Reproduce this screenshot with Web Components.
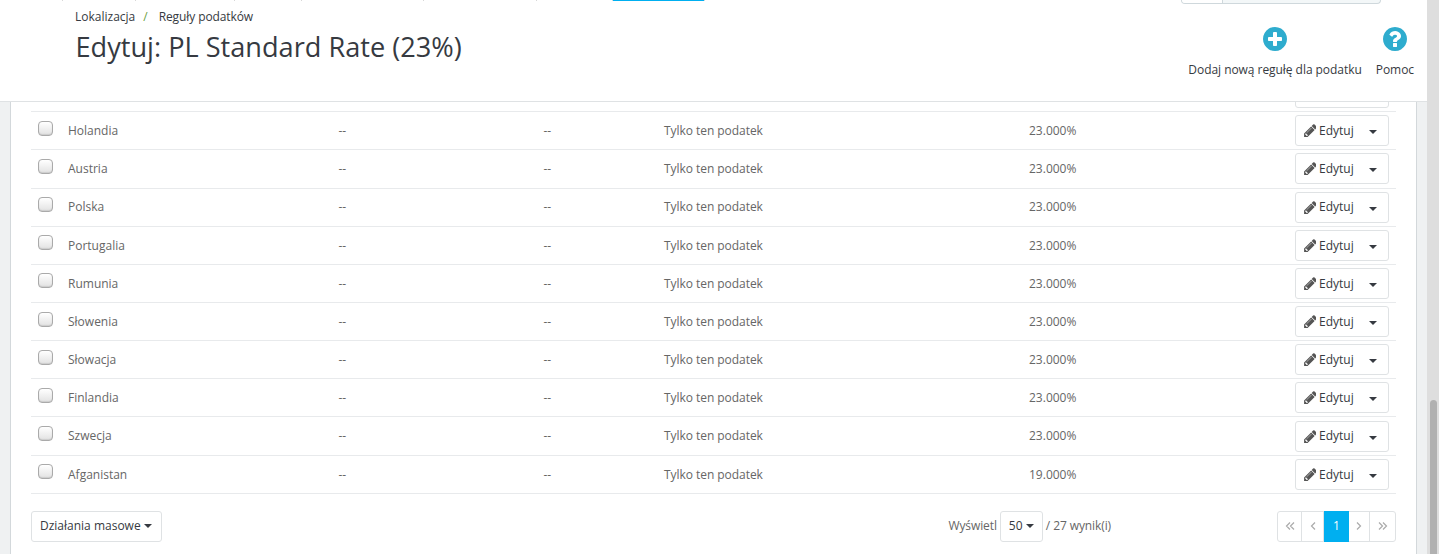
<!DOCTYPE html>
<html lang="pl"><head><meta charset="utf-8"><title>Edytuj</title>
<style>
html,body{margin:0;padding:0;height:554px;overflow:hidden;background:#eff1f2}
body{font:12px/18px "Open Sans",sans-serif;color:#363a41}
</style></head>
<body>
<admin-shell>
  <page-head>
    <head-action slot="actions" label="Dodaj nową regułę dla podatku" icon="plus"></head-action>
    <head-action slot="actions" label="Pomoc" icon="help"></head-action>
  </page-head>
  <rules-panel>
    <tax-row clipped></tax-row>
    <tax-row name="Holandia" rate="23.000%"></tax-row>
    <tax-row name="Austria" rate="23.000%"></tax-row>
    <tax-row name="Polska" rate="23.000%"></tax-row>
    <tax-row name="Portugalia" rate="23.000%"></tax-row>
    <tax-row name="Rumunia" rate="23.000%"></tax-row>
    <tax-row name="Słowenia" rate="23.000%"></tax-row>
    <tax-row name="Słowacja" rate="23.000%"></tax-row>
    <tax-row name="Finlandia" rate="23.000%"></tax-row>
    <tax-row name="Szwecja" rate="23.000%"></tax-row>
    <tax-row name="Afganistan" rate="19.000%"></tax-row>
    <list-footer slot="footer"></list-footer>
  </rules-panel>
</admin-shell>
<script>
const PENCIL='M491 1536l91-91-235-235-91 91v107h128v128h107zm523-928q0-22-22-22-10 0-17 7l-542 542q-7 7-7 17 0 22 22 22 10 0 17-7l542-542q7-7 7-17zm-54-192l416 416-832 832h-416v-416zm683 96q0 53-37 90l-166 166-416-416 166-165q36-38 90-38 53 0 91 38l235 234q37 39 37 91z';
const ICONS={
 plus:'M1344 960v-128q0-26-19-45t-45-19h-256v-256q0-26-19-45t-45-19h-128q-26 0-45 19t-19 45v256h-256q-26 0-45 19t-19 45v128q0 26 19 45t45 19h256v256q0 26 19 45t45 19h128q26 0 45-19t19-45v-256h256q26 0 45-19t19-45zm320-64q0 209-103 385.5t-279.5 279.5-385.5 103-385.5-103-279.5-279.5-103-385.5 103-385.5 279.5-279.5 385.5-103 385.5 103 279.5 279.5 103 385.5z',
 help:'M1024 1376v-192q0-14-9-23t-23-9h-192q-14 0-23 9t-9 23v192q0 14 9 23t23 9h192q14 0 23-9t9-23zm256-672q0-88-55.5-163t-138.5-116-170-41q-243 0-371 213-15 24 8 42l132 100q7 6 19 6 16 0 25-12 53-68 86-92 34-24 86-24 48 0 85.5 26t37.5 59q0 38-20 61t-68 45q-63 28-115.5 86.5t-52.5 125.5v36q0 14 9 23t23 9h192q14 0 23-9t9-23q0-19 21.5-49.5t54.5-49.5q32-18 49-28.5t46-35 44.5-48 28-60.5 12.5-81zm384 192q0 209-103 385.5t-279.5 279.5-385.5 103-385.5-103-279.5-279.5-103-385.5 103-385.5 279.5-279.5 385.5-103 385.5 103 279.5 279.5 103 385.5z'
};
function def(name,html){
  customElements.define(name,class extends HTMLElement{
    connectedCallback(){
      if(this.shadowRoot)return;
      const r=this.attachShadow({mode:'open'});
      r.innerHTML=typeof html==='function'?html(this):html;
    }
  });
}
def('admin-shell',`<style>
:host{display:flex;width:1439px;height:554px;overflow:hidden}
.main{width:1427px;display:flex;flex-direction:column;height:554px;overflow:hidden}
.track{width:12px;height:554px;background:#dedede;position:relative;flex:none}
.thumb{position:absolute;left:3px;top:400px;width:7px;height:154px;background:#b1b1b1;border-radius:4px 4px 0 0}
</style><div class="main"><slot></slot></div><div class="track"><div class="thumb"></div></div>`);

def('page-head',`<style>
:host{display:block;height:102px;box-sizing:border-box;background:#fff;border-bottom:1px solid #dfe2e4;flex:none;overflow:hidden}
.nav{display:flex;height:4px}
.tabs{display:flex;height:1px}
.tabs i{display:block;box-sizing:border-box;height:1px;border-right:1px solid #d8d8d8}
.tabs i.on{border-right:0;background:#00aff0}
.search{margin:0 46px 0 auto;width:200px;height:4px;box-sizing:border-box;border:1px solid #cfd8dc;border-top:0;border-radius:0 0 4px 4px;display:flex;background:#f3f7f8}
.search b{display:block;width:41px;background:#fff;border-right:1px solid #cfd8dc;box-sizing:border-box;border-radius:0 0 0 4px}
.body{display:flex;justify-content:space-between}
.left{padding:4px 0 0 75px}
.crumbs{font-size:12px;line-height:18px;color:#363a41;display:flex}
.crumbs em{font-style:normal;color:#6c9f44;margin:0 11px 0 8px}
.crumbs span:last-child{letter-spacing:-.1px}
h1{margin:2px 0 0 .5px;font-weight:400;font-size:27.15px;line-height:38px;color:#363a41;white-space:nowrap}
.acts{display:flex;padding:23px 13px 0 0;gap:14px}
</style>
<div class="nav"><div class="tabs">
<i style="width:63px"></i><i style="width:73px"></i><i style="width:99px"></i><i style="width:67px"></i><i style="width:122px"></i><i style="width:113px"></i><i style="width:76px"></i><i class="on" style="width:91px"></i><i style="width:1px"></i>
</div><div class="search"><b></b></div></div>
<div class="body"><div class="left"><nav class="crumbs"><span>Lokalizacja</span><em>/</em><span>Reguły podatków</span></nav>
<h1>Edytuj: PL Standard Rate (23%)</h1></div>
<div class="acts"><slot name="actions"></slot></div></div>`);

def('head-action',h=>`<style>
:host{display:flex;flex-direction:column;align-items:center;color:#363a41;font-size:12px;line-height:18px;white-space:nowrap;letter-spacing:-.05px}
svg{width:24px;height:24px;display:block;margin-bottom:10px;fill:#2eacce}
</style><svg viewBox="128 128 1536 1536"><path d="${ICONS[h.getAttribute('icon')]}"/></svg><span>${h.getAttribute('label')}</span>`);

def('rules-panel',`<style>
:host{display:block;flex:1;margin-left:10px;margin-right:10px;box-sizing:border-box;background:#fff;border-left:1px solid #d3d8db;border-right:1px solid #d3d8db;padding:0 20px;overflow:hidden}
</style><slot></slot><slot name="footer"></slot>`);

def('edit-button',`<style>
:host{display:flex;width:94px;height:31px;box-sizing:border-box;border:1px solid #dfe2e4;border-radius:3px;background:#fff;align-items:center;color:#363a41;font-size:12px;line-height:18px;flex:none;position:relative}
svg{width:13px;height:13px;margin-left:7px;fill:#555;flex:none;margin-right:3px}
span{padding-top:.84px}
.caret{position:absolute;left:73px;top:14px;width:0;height:0;border:4px solid transparent;border-top-color:#363a41;border-bottom:0}
</style><svg viewBox="0 128 1536 1536"><path d="${PENCIL}"/></svg><span><slot></slot></span><i class="caret"></i>`);

def('tax-row',h=>{
 if(h.hasAttribute('clipped')) return `<style>
:host{display:flex;height:10.2px;box-sizing:border-box;border-bottom:1px solid #e8eaec;overflow:hidden;justify-content:flex-end;padding-right:7px;align-items:flex-end}
i{display:block;width:94px;height:31px;box-sizing:border-box;border:1px solid #dfe2e4;border-radius:3px;margin-bottom:3px;flex:none}
</style><i></i>`;
 const n=h.getAttribute('name'),r=h.getAttribute('rate');
 return `<style>
:host{display:grid;grid-template-columns:37px 271px 205px 120px 365px 1fr auto;height:38.16px;box-sizing:border-box;border-bottom:1px solid #e8eaec;align-items:center;color:#666;font-size:12px;line-height:18px}
.cb{width:15px;height:15px;box-sizing:border-box;margin:-5px 0 0 7px;border:1px solid #aaa;border-radius:4px;background:linear-gradient(#fff,#e2e2e2);box-shadow:inset 0 -1px 1px #ccc}
.t{padding-top:.84px}
.d{margin-left:-.5px}
.k{letter-spacing:-.05px}
.e{margin-right:7px}
</style><div class="cb"></div><div class="t">${n}</div><div class="t d">--</div><div class="t d">--</div><div class="t k">Tylko ten podatek</div><div class="t">${r}</div><edit-button class="e">Edytuj</edit-button>`;
});

def('list-footer',`<style>
:host{display:flex;align-items:center;margin-top:17px;height:31px;color:#666;font-size:12px}
.btn{box-sizing:border-box;height:31px;border:1px solid #dfe2e4;border-radius:3px;display:flex;align-items:center;background:#fff;color:#363a41}
.bulk{width:131px;padding-left:8px}
.caret{display:inline-block;width:0;height:0;border:4px solid transparent;border-top-color:#363a41;border-bottom:0;margin-left:3px}
.show{margin-left:auto;margin-right:166px;display:flex;align-items:center}
.show>span{letter-spacing:-.1px}
.sel{width:43px;padding-left:8px;margin:0 3px 0 3px}
.pg{display:flex;box-sizing:border-box;height:31px;border:1px solid #dfe2e4;border-radius:3px;width:119px}
.pg>*{display:flex;align-items:center;justify-content:center;border-right:1px solid #dfe2e4;box-sizing:border-box;height:29px}
.pg>*:last-child{border-right:0}
.pg svg{width:10px;height:10px;fill:none;stroke:#aaa;stroke-width:1.2}
.cur{background:#00aff0;color:#fff;margin:-1px 0;height:31px!important;border-right:0!important}
</style>
<div class="btn bulk">Działania masowe<i class="caret"></i></div>
<div class="show"><span>Wyświetl</span><div class="btn sel">50<i class="caret"></i></div><span>/ 27 wynik(i)</span></div>
<div class="pg">
<a style="width:24px"><svg viewBox="0 0 10 10"><path d="M5 1.5L1.5 5 5 8.5M9 1.5L5.5 5 9 8.5"/></svg></a>
<a style="width:22px"><svg viewBox="0 0 10 10"><path d="M7 1.5L3.5 5 7 8.5"/></svg></a>
<span class="cur" style="width:25px">1</span>
<a style="width:21px"><svg viewBox="0 0 10 10"><path d="M3 1.5L6.5 5 3 8.5"/></svg></a>
<a style="width:25px"><svg viewBox="0 0 10 10"><path d="M1 1.5L4.5 5 1 8.5M5 1.5L8.5 5 5 8.5"/></svg></a>
</div>`);
</script>
</body></html>
